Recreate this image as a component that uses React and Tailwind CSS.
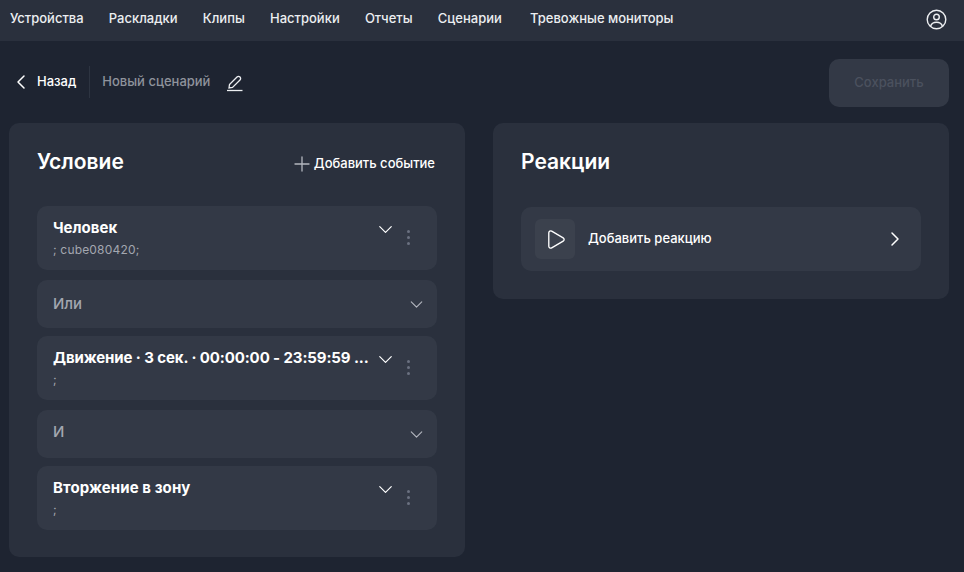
import React from "react";
import { ChevronDown, ChevronLeft, ChevronRight, Plus, Play } from "lucide-react";

const NAV_ITEMS = ["Устройства", "Раскладки", "Клипы", "Настройки", "Отчеты", "Сценарии", "Тревожные мониторы"];

const Dots = () => (
  <div className="flex flex-col gap-[3px] items-center w-[3px]">
    <span className="w-[3px] h-[3px] rounded-full bg-[#6b7180]" />
    <span className="w-[3px] h-[3px] rounded-full bg-[#6b7180]" />
    <span className="w-[3px] h-[3px] rounded-full bg-[#6b7180]" />
  </div>
);

const EventCard = ({ title, sub, titleClass, className }) => (
  <div className={`h-16 rounded-[10px] bg-[#333946] pl-4 pr-[27px] pt-[12px] flex ${className}`}>
    <div className="flex-1 min-w-0">
      <div className={`whitespace-nowrap text-[15px] leading-[20px] font-bold text-white ${titleClass}`}>{title}</div>
      <div className="text-[12px] leading-[16px] mt-[4px] tracking-[0.015em] text-[#a3a7b0]">{sub}</div>
    </div>
    <ChevronDown size={23} strokeWidth={1.25} className="text-white shrink-0" />
    <div className="ml-[10px] mt-[12px] shrink-0">
      <Dots />
    </div>
  </div>
);

const JoinCard = ({ label, labelClass, className }) => (
  <div className={`h-12 rounded-[10px] bg-[#333946] pl-4 pr-[10px] flex items-center justify-between ${className}`}>
    <span className={`text-[15px] leading-[20px] font-medium text-[#a3a7b0] ${labelClass}`}>{label}</span>
    <ChevronDown size={21} strokeWidth={1.25} className="text-[#b4b7bf]" />
  </div>
);

const App = () => {
  return (
    <div className="w-[964px] h-[572px] overflow-hidden bg-[#1e2431] font-['Inter',sans-serif] text-white">
      <header className="h-[41px] bg-[#2a303d] pl-[10px] pr-[17px] flex items-center justify-between">
        <nav className="flex gap-[25.2px] text-[13px] font-medium text-[#eceef1] -mt-[4px]">
          {NAV_ITEMS.map((item) => (
            <span key={item} className="last:ml-[3px]">{item}</span>
          ))}
        </nav>
        <svg className="-mt-[3px]" width="21" height="21" viewBox="0 0 21 21" fill="none" stroke="#eceef1" strokeWidth="1.4">
          <circle cx="10.5" cy="10.5" r="9.3" />
          <circle cx="10.5" cy="8" r="2.8" />
          <path d="M4.6 17.2c.8-2.8 3-4 5.9-4s5.1 1.2 5.9 4" />
        </svg>
      </header>

      <div className="h-[82px] pl-[9px] pr-[15px] flex items-center justify-between">
        <div className="flex items-center">
          <ChevronLeft size={24} strokeWidth={1.5} className="text-white" />
          <span className="ml-[4px] text-[13px] font-medium text-white">Назад</span>
          <span className="ml-[13px] w-px h-8 bg-[#2d3441]" />
          <span className="ml-3 text-[13px] font-medium text-[#8f939c]">Новый сценарий</span>
          <svg className="ml-[17px] mt-[1px]" width="16" height="18" viewBox="0 0 16 18" fill="none" stroke="#eceef1" strokeWidth="1.3">
            <path d="M2.5 10.5 10 3a2.1 2.1 0 0 1 3 3l-7.5 7.5-3.5.5z" />
            <path d="M0 16.5h15.5" />
          </svg>
        </div>
        <button className="w-[120px] h-12 mt-[2px] rounded-[10px] bg-[#333946] text-[13px] font-medium text-[#4b515e]">
          Сохранить
        </button>
      </div>

      <main className="pl-[9px] pr-[15px] flex gap-7 items-start">
        <section className="w-[456px] h-[434px] rounded-[10px] bg-[#2a303d] px-7 pt-[25px]">
          <div className="flex items-center justify-between h-[28px]">
            <h2 className="text-[21px] font-semibold text-white">Условие</h2>
            <button className="flex items-center mt-[3px] text-[13px] font-medium text-white mr-[2px]">
              <Plus size={24} strokeWidth={1.3} className="text-[#b4b7bf]" />
              Добавить событие
            </button>
          </div>
          <div className="mt-[30px]">
            <EventCard title="Человек" sub="; cube080420;" />
            <JoinCard label="Или" className="mt-[10px]" />
            <EventCard
              title="Движение · 3 сек. · 00:00:00 - 23:59:59 ..."
              titleClass="tracking-[-0.1px]"
              sub=";"
              className="mt-2"
            />
            <JoinCard label="И" labelClass="-mt-[4px]" className="mt-[10px]" />
            <EventCard title="Вторжение в зону" titleClass="tracking-[0.1px]" sub=";" className="mt-2" />
          </div>
        </section>

        <section className="w-[456px] h-[176px] rounded-[10px] bg-[#2a303d] px-7 pt-[25px]">
          <h2 className="h-[28px] text-[21px] leading-[28px] font-semibold text-white">Реакции</h2>
          <div className="mt-[31px] h-16 rounded-[10px] bg-[#333946] px-[14px] flex items-center">
            <div className="w-10 h-10 rounded-md bg-[#3b414d] flex items-center justify-center">
              <Play size={23} strokeWidth={1.4} className="text-white" />
            </div>
            <span className="ml-[13px] -mt-[1px] flex-1 text-[13px] font-medium text-white">Добавить реакцию</span>
            <ChevronRight size={24} strokeWidth={1.5} className="text-white" />
          </div>
        </section>
      </main>
    </div>
  );
};

export default App;
